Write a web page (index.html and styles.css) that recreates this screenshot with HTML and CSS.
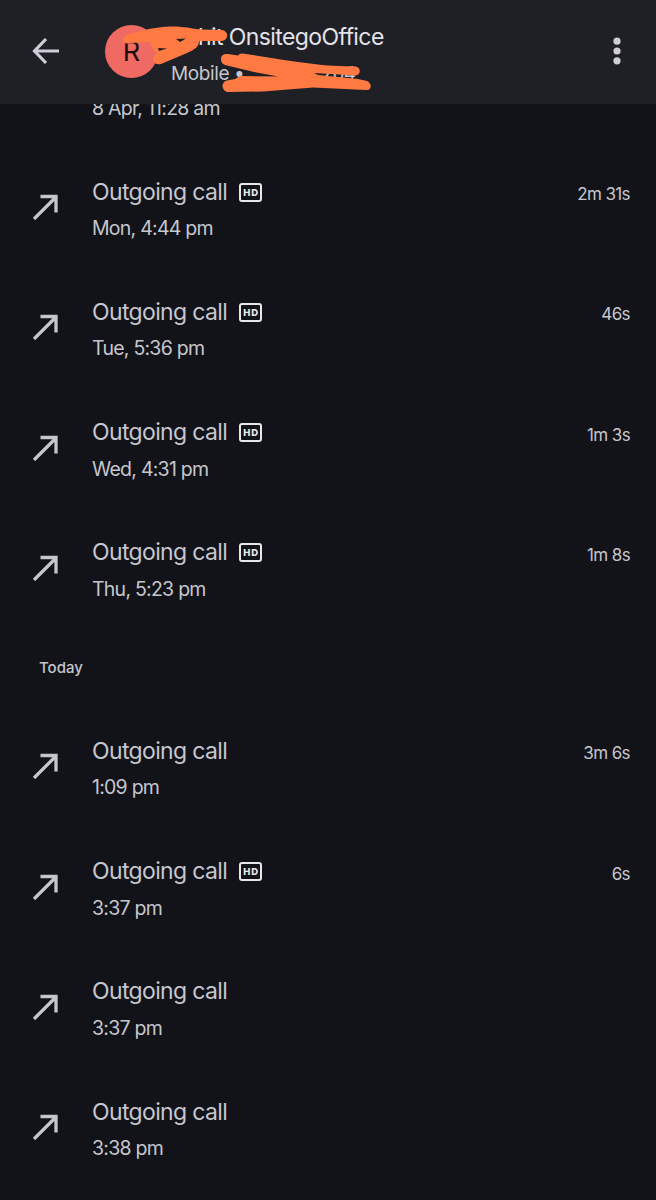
FILE: index.html
```html
<!DOCTYPE html>
<html lang="en">
<head>
  <meta charset="UTF-8">
  <meta name="viewport" content="width=device-width, initial-scale=1.0">
  <title>Call history</title>
  <link rel="stylesheet" href="styles.css">
</head>
<body>
  <svg class="defs" width="0" height="0" aria-hidden="true">
    <symbol id="outgoing" viewBox="0 0 26 26">
      <path d="M2 25L23.500 3.500M8.500 2.500H24V18.500" fill="none" stroke="currentColor" stroke-width="3.3"/>
    </symbol>
  </svg>

  <header class="app-bar">
    <svg class="back" viewBox="0 0 28 28" aria-label="Back">
      <path d="M14 2L2.500 14L14 26M3 14H27" fill="none" stroke="currentColor" stroke-width="3.2"/>
    </svg>
    <div class="avatar">R</div>
    <div class="contact">
      <div class="name">hit OnsitegoOffice</div>
      <div class="number">Mobile • <span class="digits">264</span></div>
    </div>
    <svg class="more" viewBox="0 0 8 28" aria-label="More options">
      <circle cx="4" cy="4.2" r="3.6"/>
      <circle cx="4" cy="14" r="3.6"/>
      <circle cx="4" cy="23.8" r="3.6"/>
    </svg>
    <!-- marker strokes over the private details -->
    <svg class="marker" viewBox="0 0 656 104">
      <path fill-rule="evenodd" d="M123 40C123 36 127 34 140 31.500C151 28 160 27 170 26.500C182 26 194 29 202 29.500L222 30C229 31 229 40 222 41L199 41C199 46 196 49 187 53L161 64C154 66 151 59 155 55L157 53C154 51 154 49 152 47L150 42L130 43C126 44 123 43 123 40ZM176 39L186 38.500L180 42ZM158 48L167 48.500L159 51Z"/>
      <path d="M221 59C221 55 224 53.500 228 54L238 55.500C240 53 243 53.500 246 54C268 57 289 61 310 63.500C326 66 342 66 356 66.500C361 68 361 74 356 75.500L314 73L318 75L358 79L367 81C373 84 371 91 366 90L313 87.500L263 91.500L227 92C221 90 221 82 227 80.500L235 79L240 76L278 76.500L253 71.700L225 65C222 64 221 62 221 59Z"/>
    </svg>
  </header>

  <main class="history">
    <ul class="calls earlier">
      <li class="call">
        <svg class="arrow"><use href="#outgoing"/></svg>
        <div class="info"><div class="type"></div><div class="time">8 Apr, 11:28 am</div></div>
      </li>
      <li class="call">
        <svg class="arrow"><use href="#outgoing"/></svg>
        <div class="info"><div class="type">Outgoing call <span class="hd">HD</span></div><div class="time">Mon, 4:44 pm</div></div>
        <div class="duration">2m 31s</div>
      </li>
      <li class="call">
        <svg class="arrow"><use href="#outgoing"/></svg>
        <div class="info"><div class="type">Outgoing call <span class="hd">HD</span></div><div class="time">Tue, 5:36 pm</div></div>
        <div class="duration">46s</div>
      </li>
      <li class="call">
        <svg class="arrow"><use href="#outgoing"/></svg>
        <div class="info"><div class="type">Outgoing call <span class="hd">HD</span></div><div class="time">Wed, 4:31 pm</div></div>
        <div class="duration">1m 3s</div>
      </li>
      <li class="call">
        <svg class="arrow"><use href="#outgoing"/></svg>
        <div class="info"><div class="type">Outgoing call <span class="hd">HD</span></div><div class="time">Thu, 5:23 pm</div></div>
        <div class="duration">1m 8s</div>
      </li>
    </ul>

    <h2 class="day">Today</h2>

    <ul class="calls">
      <li class="call">
        <svg class="arrow"><use href="#outgoing"/></svg>
        <div class="info"><div class="type">Outgoing call</div><div class="time">1:09 pm</div></div>
        <div class="duration">3m 6s</div>
      </li>
      <li class="call">
        <svg class="arrow"><use href="#outgoing"/></svg>
        <div class="info"><div class="type">Outgoing call <span class="hd">HD</span></div><div class="time">3:37 pm</div></div>
        <div class="duration">6s</div>
      </li>
      <li class="call">
        <svg class="arrow"><use href="#outgoing"/></svg>
        <div class="info"><div class="type">Outgoing call</div><div class="time">3:37 pm</div></div>
      </li>
      <li class="call">
        <svg class="arrow"><use href="#outgoing"/></svg>
        <div class="info"><div class="type">Outgoing call</div><div class="time">3:38 pm</div></div>
      </li>
    </ul>
  </main>
</body>
</html>
```
FILE: styles.css
```css
* {
  box-sizing: border-box;
}
body {
  margin: 0;
  height: 1200px;
  display: flex;
  flex-direction: column;
  overflow: hidden;
  background: #121318;
  color: #c6c6ce;
  font-family: Inter, Roboto, sans-serif;
}
.defs {
  position: absolute;
}
.app-bar {
  position: relative;
  flex: none;
  display: flex;
  align-items: center;
  height: 104px;
  padding: 0 35px 2px 32px;
  background: #1e2025;
}
.back {
  width: 28px;
  height: 28px;
  color: #cfced8;
}
.avatar {
  width: 53px;
  height: 53px;
  margin-left: 45px;
  border-radius: 50%;
  background: #ef6a62;
  color: #210d0d;
  font-size: 27px;
  line-height: 54px;
  text-align: center;
}
.contact {
  flex: 1;
  margin-left: 13px;
  padding-top: 7px;
  white-space: nowrap;
}
.name {
  height: 36px;
  padding-left: 27px;
  color: #e3e2e9;
  font-size: 23px;
  line-height: 36px;
  letter-spacing: -0.6px;
}
.number {
  height: 36px;
  font-size: 19px;
  line-height: 37px;
  letter-spacing: -0.4px;
}
.digits {
  margin-left: 72px;
}
.more {
  width: 8px;
  height: 28px;
  fill: #cfced8;
}
.marker {
  position: absolute;
  left: 0;
  top: 0;
  width: 656px;
  height: 104px;
  fill: #ff7a43;
}
.history {
  flex: 1;
  min-height: 0;
  overflow: hidden;
}
.calls {
  margin: 0;
  padding: 0;
  list-style: none;
}
.earlier {
  margin-top: -77px;
}
.call {
  display: flex;
  height: 120.2px;
  padding: 27px 26px 0 32px;
}
.arrow {
  flex: none;
  width: 26px;
  height: 26px;
  margin-top: 20px;
}
.info {
  flex: 1;
  margin-left: 34px;
}
.type {
  display: flex;
  align-items: center;
  height: 36px;
  font-size: 23px;
  line-height: 37px;
  letter-spacing: -0.65px;
}
.hd {
  width: 23px;
  height: 19px;
  margin-left: 12px;
  border: 2.5px solid #e6e6ec;
  border-radius: 3px;
  color: #e6e6ec;
  font-size: 9.5px;
  font-weight: 800;
  line-height: 15px;
  letter-spacing: 0.8px;
  text-indent: 1px;
  text-align: center;
}
.time {
  height: 36px;
  font-size: 19.5px;
  line-height: 36.5px;
  letter-spacing: -0.75px;
}
.duration {
  font-size: 17px;
  line-height: 41px;
  letter-spacing: -0.6px;
}
.day {
  height: 78.5px;
  margin: 0;
  padding-left: 39px;
  font-size: 15px;
  font-weight: 500;
  line-height: 80px;
}
```
